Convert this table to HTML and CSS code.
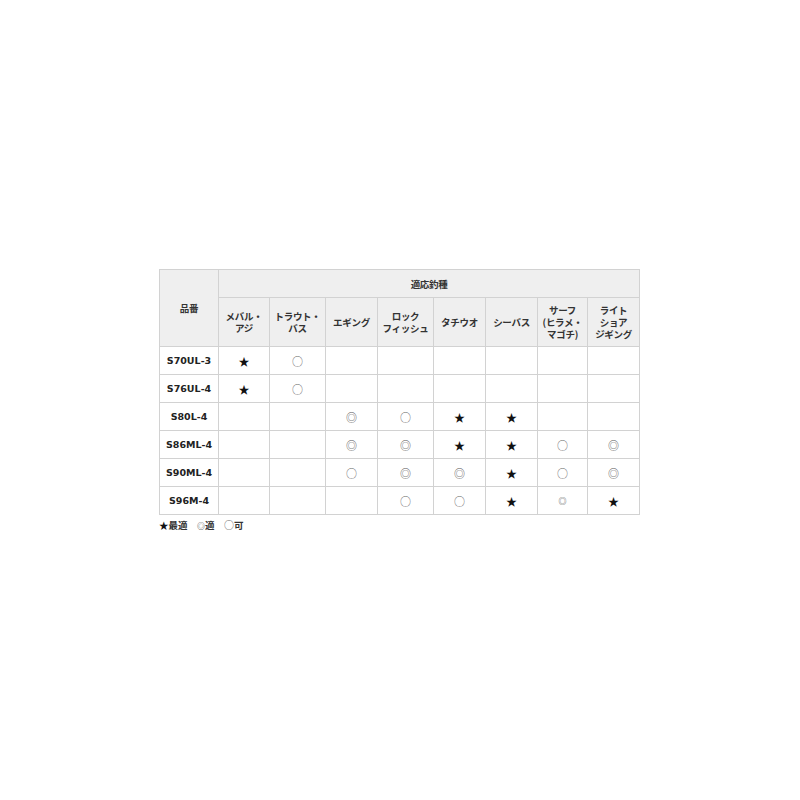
FILE: index.html
```html
<!DOCTYPE html>
<html lang="ja">
<head>
<meta charset="utf-8">
<link rel="stylesheet" href="styles.css">
</head>
<body>
<div class="page">
  <table class="spec">
    <colgroup>
      <col class="c0"><col class="c1"><col class="c2"><col class="c3"><col class="c4"><col class="c5"><col class="c6"><col class="c7"><col class="c8">
    </colgroup>
    <thead>
      <tr class="h1">
        <th rowspan="2">品番</th>
        <th colspan="8">適応釣種</th>
      </tr>
      <tr class="h2">
        <th>メバル・<br>アジ</th>
        <th>トラウト・<br>バス</th>
        <th>エギング</th>
        <th>ロック<br>フィッシュ</th>
        <th>タチウオ</th>
        <th>シーバス</th>
        <th>サーフ<br>(ヒラメ・<br>マゴチ)</th>
        <th>ライト<br>ショア<br>ジギング</th>
      </tr>
    </thead>
    <tbody>
      <tr><td class="model">S70UL-3</td><td class="s">★</td><td class="o">○</td><td></td><td></td><td></td><td></td><td></td><td></td></tr>
      <tr><td class="model">S76UL-4</td><td class="s">★</td><td class="o">○</td><td></td><td></td><td></td><td></td><td></td><td></td></tr>
      <tr><td class="model">S80L-4</td><td></td><td></td><td class="d">◎</td><td class="o">○</td><td class="s">★</td><td class="s">★</td><td></td><td></td></tr>
      <tr><td class="model">S86ML-4</td><td></td><td></td><td class="d">◎</td><td class="d">◎</td><td class="s">★</td><td class="s">★</td><td class="o">○</td><td class="d">◎</td></tr>
      <tr><td class="model">S90ML-4</td><td></td><td></td><td class="o">○</td><td class="d">◎</td><td class="d">◎</td><td class="s">★</td><td class="o">○</td><td class="d">◎</td></tr>
      <tr><td class="model">S96M-4</td><td></td><td></td><td></td><td class="o">○</td><td class="o">○</td><td class="s">★</td><td class="d small">◎</td><td class="s">★</td></tr>
    </tbody>
  </table>
  <p class="legend"><span class="ls">★</span>最適　<span class="ld">◎</span>適　<span class="lo">○</span>可</p>
</div>
</body>
</html>
```

FILE: styles.css
```css
html, body {
  margin: 0;
  padding: 0;
  background: #ffffff;
}
.page {
  padding: 269px 0 0 159px;
  font-family: "Noto Sans CJK JP", "Noto Sans", sans-serif;
  color: #222;
}
.spec {
  border-collapse: collapse;
  table-layout: fixed;
  width: 481px;
  font-size: 10px;
  line-height: 12px;
}
.c0 { width: 59px; }
.c1 { width: 51px; }
.c2 { width: 56px; }
.c3 { width: 52px; }
.c4 { width: 56px; }
.c5 { width: 52px; }
.c6 { width: 52px; }
.c7 { width: 50px; }
.c8 { width: 52px; }
.spec th, .spec td {
  border: 1px solid #d2d2d2;
  padding: 0;
  text-align: center;
  vertical-align: middle;
}
.spec th {
  background: #efefef;
  font-weight: bold;
  color: #333;
  font-size: 9.5px;
  letter-spacing: -0.3px;
}
.h1 th { height: 27px; }
.h2 th { height: 48px; }
.spec tbody td { height: 27px; background: #fff; }
.spec td.model {
  font-family: "DejaVu Sans", "Noto Sans CJK JP", sans-serif;
  font-weight: bold;
  font-size: 9.5px;
  color: #222;
}
.s { color: #111; font-size: 11px; }
.o { color: #666; font-size: 11px; }
.d { color: #555; font-size: 11px; }
.d.small { font-size: 8px; }
.legend {
  margin: 4px 0 0 0;
  font-size: 9.5px;
  font-weight: bold;
  color: #333;
  line-height: 12px;
}
.ls { color: #111; }
.ld { color: #555; font-size: 8px; }
.lo { color: #666; font-size: 10px; font-weight: normal; }
```
